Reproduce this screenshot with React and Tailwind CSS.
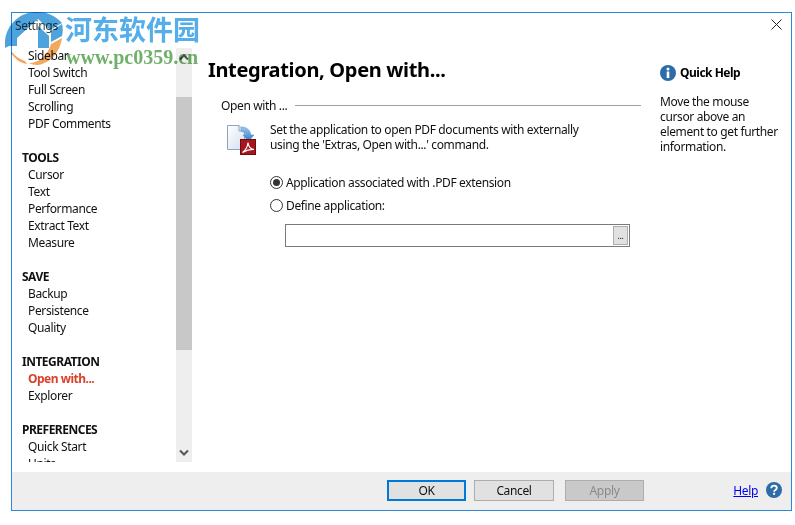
import React from "react";

const sections = [
  { items: ["Sidebar", "Tool Switch", "Full Screen", "Scrolling", "PDF Comments"] },
  { title: "TOOLS", items: ["Cursor", "Text", "Performance", "Extract Text", "Measure"] },
  { title: "SAVE", items: ["Backup", "Persistence", "Quality"] },
  { title: "INTEGRATION", items: ["Open with...", "Explorer"] },
  { title: "PREFERENCES", items: ["Quick Start", "Units"] },
];

function PdfIcon() {
  return (
    <svg width="34" height="34" viewBox="0 0 34 34" className="mt-[7px] shrink-0">
      <defs>
        <linearGradient id="pg" x1="0" y1="0" x2="1" y2="1">
          <stop offset="0" stopColor="#ffffff" />
          <stop offset="1" stopColor="#d3e0f0" />
        </linearGradient>
        <linearGradient id="ar" x1="0" y1="0" x2="0" y2="1">
          <stop offset="0" stopColor="#9cc6ee" />
          <stop offset="1" stopColor="#2f78c8" />
        </linearGradient>
      </defs>
      <path d="M2.500 3.500H14L19.500 9V27.500H2.500Z" fill="url(#pg)" stroke="#8fa3bd" />
      <path d="M14 3.500V9H19.500" fill="#eef3fa" stroke="#8fa3bd" />
      <path d="M16 5c6 0 9 3 10 8h3l-5.500 6.500L18 13h3c-.5-2-2.500-3.500-5-4Z" fill="url(#ar)" stroke="#4a88c8" strokeWidth=".5" />
      <rect x="15.500" y="17.500" width="15" height="15" fill="#a8161c" stroke="#6d0d10" />
      <path d="M17.500 30.500c3-2 5-6 5.500-10 .3 4 3 6.500 6 7-3-.2-7 .5-11.500 3Z" fill="none" stroke="#fff" strokeWidth="1.200" />
    </svg>
  );
}

function Radio({ checked, label }) {
  return (
    <div className="flex h-[23px] items-center">
      <span className="flex h-[13px] w-[13px] items-center justify-center rounded-full border border-[#333333] bg-white">
        {checked && <span className="h-[7px] w-[7px] rounded-full bg-[#333333]" />}
      </span>
      <span className="ml-[3px]">{label}</span>
    </div>
  );
}

function Chevron({ up }) {
  return (
    <svg width="10" height="7" viewBox="0 0 10 7">
      <path d={up ? "M1 5.500 5 1.500 9 5.500" : "M1 1.500 5 5.500 9 1.500"} fill="none" stroke="#555555" strokeWidth="2" />
    </svg>
  );
}

function Button({ children, variant }) {
  const cls =
    variant === "ok"
      ? "w-[79px] border-2 border-[#0078d7] bg-[#e1e1e1] text-[#111111]"
      : variant === "disabled"
      ? "w-[79px] border border-[#adadad] bg-[#c9c9c9] text-[#8a8a8a]"
      : "w-[80px] border border-[#adadad] bg-[#e1e1e1] text-[#111111]";
  return <div className={`flex h-[21px] items-center justify-center ${cls}`}>{children}</div>;
}

export default function App() {
  return (
    <div
      className="relative h-[525px] w-[795px] overflow-hidden bg-white pl-[11px] pt-[12px] text-[12px] leading-[17px] tracking-[-0.36px] text-[#111111]"
      style={{ fontFamily: '"Noto Sans", sans-serif' }}
    >
      <div className="flex h-[499px] w-[781px] flex-col border border-[#2b87d8] bg-white">
        <div className="flex h-[35px] shrink-0 items-start justify-between pl-[3px] pr-[9px] pt-[4px]">
          <span className="text-[#444444]">Settings</span>
          <svg width="11" height="11" viewBox="0 0 11 11" className="mt-[2px]">
            <path d="M.5.500 10.500 10.500M10.500.500.500 10.500" stroke="#222222" strokeWidth="1" />
          </svg>
        </div>
        <div className="flex min-h-0 flex-1">
          <div className="flex h-[414px] w-[180px] shrink-0">
            <div className="h-full w-[164px] overflow-hidden">
              <div className="mt-[-1px]">
                {sections.map((s, i) => (
                  <div key={i} className="mb-[17px]">
                    {s.title && <div className="h-[17px] pl-[10px] font-bold tracking-[-0.5px]">{s.title}</div>}
                    {s.items.map((it) => (
                      <div
                        key={it}
                        className={`h-[17px] pl-[16px] ${it === "Open with..." ? "font-bold tracking-[-0.5px] text-[#d9412b]" : ""}`}
                      >
                        {it}
                      </div>
                    ))}
                  </div>
                ))}
              </div>
            </div>
            <div className="flex h-full w-[16px] flex-col bg-[#eeeeee]">
              <div className="flex h-[49px] items-start justify-center pt-[6px]">
                <Chevron up />
              </div>
              <div className="h-[253px] bg-[#c8c8c8]" />
              <div className="flex flex-1 items-end justify-center pb-[6px]">
                <Chevron />
              </div>
            </div>
          </div>
          <div className="w-[468px] shrink-0 pl-[16px] pr-[19px]">
            <h1 className="mt-[9px] text-[20px] font-bold leading-[26px] tracking-[-0.33px] text-black">
              Integration, Open with...
            </h1>
            <div className="mt-[14px] flex items-center pl-[13px]">
              <span>Open with ...</span>
              <div className="ml-[8px] h-px flex-1 bg-[#a0a0a0]" />
            </div>
            <div className="mt-[1px] flex pl-[17px]">
              <PdfIcon />
              <p className="ml-[11px] mt-[7px] leading-[15px]">
                Set the application to open PDF documents with externally
                <br />
                using the 'Extras, Open with...' command.
              </p>
            </div>
            <div className="mt-[15px] pl-[62px]">
              <Radio checked label="Application associated with .PDF extension" />
              <Radio label="Define application:" />
              <div className="ml-[15px] mt-[7px] flex h-[23px] w-[345px] items-center justify-end border border-[#7a7a7a] pr-px">
                <div className="flex h-[19px] w-[15px] items-center justify-center border border-[#adadad] bg-[#e1e1e1] text-[9px] leading-none">
                  ...
                </div>
              </div>
            </div>
          </div>
          <div className="flex-1 pl-0 pr-[8px] pt-[16px]">
            <div className="flex items-center font-bold tracking-[-0.5px] text-black">
              <svg width="16" height="16" viewBox="0 0 16 16" className="mr-[4px] shrink-0">
                <circle cx="8" cy="8" r="8" fill="#2e6ca8" />
                <circle cx="8" cy="4" r="1.500" fill="#ffffff" />
                <rect x="6.700" y="6.500" width="2.600" height="6.500" fill="#ffffff" />
              </svg>
              Quick Help
            </div>
            <p className="mt-[13px] leading-[15px]">
              Move the mouse
              <br />
              cursor above an
              <br />
              element to get further
              <br />
              information.
            </p>
          </div>
        </div>
        <div className="flex h-[38px] shrink-0 items-center bg-[#eeeeee] pb-[2px] pl-[375px] pr-[9px]">
          <Button variant="ok">OK</Button>
          <div className="w-[8px]" />
          <Button>Cancel</Button>
          <div className="w-[11px]" />
          <Button variant="disabled">Apply</Button>
          <span className="ml-auto text-[#0000ee] underline">Help</span>
          <svg width="16" height="16" viewBox="0 0 16 16" className="ml-[8px]">
            <circle cx="8" cy="8" r="8" fill="#2e6ca8" />
            <path d="M5.300 6.200C5.300 4.600 6.500 3.600 8 3.600s2.800.9 2.800 2.400c0 2-2.700 2-2.700 3.800" fill="none" stroke="#fff" strokeWidth="1.800" />
            <rect x="7.100" y="10.800" width="2" height="2" fill="#fff" />
          </svg>
        </div>
      </div>

      {/* watermark over the window corner */}
      <div className="pointer-events-none absolute left-0 top-0 h-[72px] w-[205px] tracking-normal mix-blend-multiply">
        <svg width="62" height="60" viewBox="5 11 62 60" className="absolute left-[5px] top-[11px]">
          <path d="M5 48C3 28 18 12 36 12c10 0 19 3 26 11L50 30 38 19 17 38v8H9Z" fill="#4da3dc" />
          <path d="M38 26 49 36V48H38Z" fill="#4da3dc" />
          <path d="M51 31 62 24c1 3 1 8 0 12L51 42Z" fill="#4da3dc" />
          <path d="M51 44 62 38C60 52 50 64 37 65c-3 0-6-1-8-2 10 0 19-8 22-19Z" fill="#f3a860" />
          <path d="M12 52c3 4 7 7 13 9l2 3c-7-1-12-5-16-11Z" fill="#f3a860" />
        </svg>
        <span
          className="absolute left-[65px] top-[13px] text-[27px] font-bold leading-[32px] text-[#55aeea]"
          style={{ fontFamily: '"Noto Sans CJK SC", sans-serif' }}
        >
          河东软件园
        </span>
        <span
          className="absolute left-[66px] top-[47px] text-[20px] font-bold leading-[20px] text-[#6fb06a]"
          style={{ fontFamily: '"Liberation Serif", serif' }}
        >
          www.pc0359.cn
        </span>
      </div>
    </div>
  );
}
